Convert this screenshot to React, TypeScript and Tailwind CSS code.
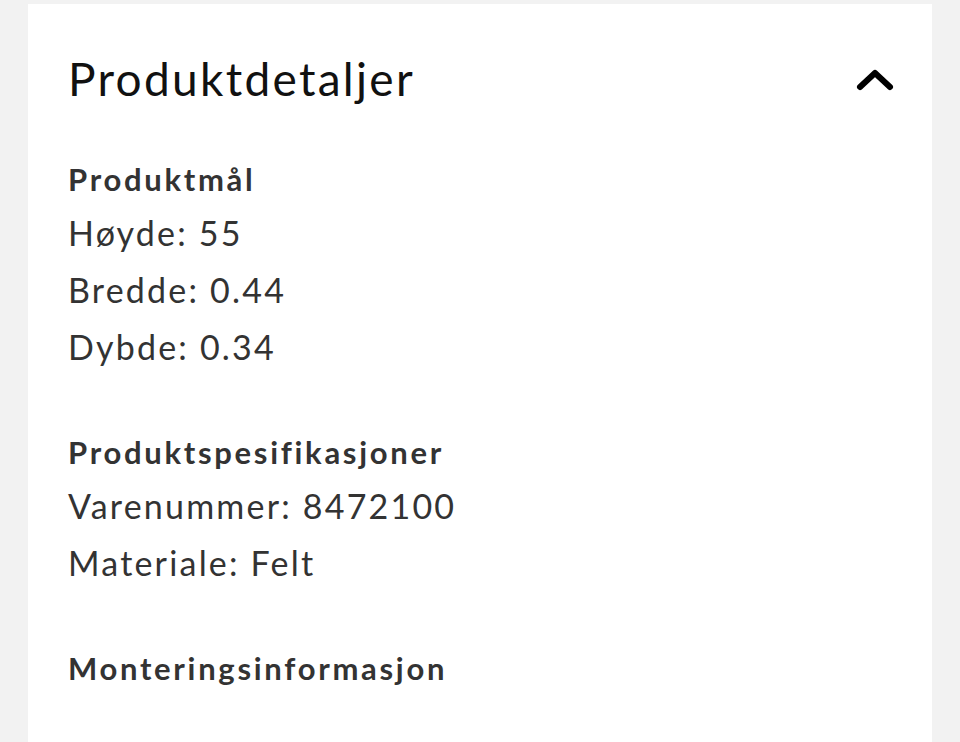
interface Section {
  title: string;
  rows: string[];
}

const sections: Section[] = [
  { title: 'Produktmål', rows: ['Høyde: 55', 'Bredde: 0.44', 'Dybde: 0.34'] },
  { title: 'Produktspesifikasjoner', rows: ['Varenummer: 8472100', 'Materiale: Felt'] },
  { title: 'Monteringsinformasjon', rows: [] },
];

export default function App() {
  return (
    <div className="h-[742px] overflow-hidden bg-[#f2f2f2] flex pl-[28px] pr-[28px] pt-[4px] font-['Lato',sans-serif]">
      <div className="flex-1 bg-white pl-[40px] pr-[38px] pt-[45px]">
        <div className="flex items-center justify-between h-[60px]">
          <h1 className="text-[46px] leading-[60px] text-[#111] tracking-[2.3px]">Produktdetaljer</h1>
          {/* collapse toggle */}
          <svg width="38" height="24" viewBox="0 0 38 24" className="mt-[2px]">
            <path d="M4 19 L19 5 L34 19" fill="none" stroke="#000" strokeWidth="6" strokeLinecap="round" strokeLinejoin="round" />
          </svg>
        </div>

        <div className="mt-[45px] flex flex-col gap-[52px]">
          {sections.map((s) => (
            <div key={s.title}>
              <h2 className="text-[31px] leading-[50px] font-bold text-[#333] tracking-[2.7px]">{s.title}</h2>
              {s.rows.map((r) => (
                <p key={r} className="text-[34px] leading-[57px] text-[#333] tracking-[2.2px]">{r}</p>
              ))}
            </div>
          ))}
        </div>
      </div>
    </div>
  );
}
